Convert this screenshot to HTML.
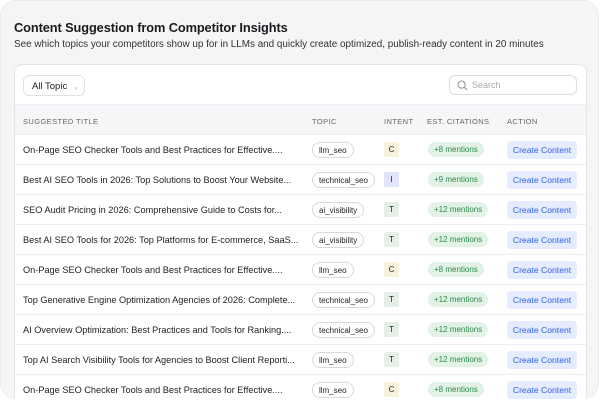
<!DOCTYPE html>
<html><head><style>
*{box-sizing:border-box;margin:0;padding:0}
body{width:600px;height:400px;background:#fff;font-family:"Liberation Sans",sans-serif;overflow:hidden;position:relative}
.panel{position:absolute;left:0;top:0;width:599px;height:399px;background:#f5f5f6;box-shadow:inset 0 0 0 1px #ececee;border-radius:16px;overflow:hidden}
h1{position:absolute;left:14px;top:20px;font-size:12.8px;font-weight:bold;color:#1b1b1f;letter-spacing:-0.1px}
.sub{position:absolute;left:14px;top:39px;font-size:9.9px;color:#333;white-space:nowrap}
.card{position:absolute;left:14px;top:64px;width:573px;height:345px;background:#fff;border:1px solid #e3e4e8;border-radius:8px;overflow:hidden}
.btn{position:absolute;left:8px;top:10px;width:62px;height:21px;border:1px solid #e0e1e5;border-radius:6px;font-size:9.5px;color:#222;padding:5px 0 0 8px}
.btn span{color:#aaa;font-size:7px;margin-left:3px}
.search{position:absolute;left:434px;top:10px;width:128px;height:20px;border:1px solid #dcdde2;border-radius:6px;font-size:9px;color:#aaa;padding:4px 0 0 22px}
.search svg{position:absolute;left:7px;top:4px}
.head{position:absolute;left:0;top:39px;width:100%;height:31px;background:#f5f6f8;border-top:1px solid #eceef1;border-bottom:1px solid #eceef1;font-size:7.5px;color:#666;letter-spacing:0.4px}
.head div,.row div{position:absolute}
.head div{top:12px}
.row{position:absolute;left:0;width:100%;height:30px;border-bottom:1px solid #eceef1;font-size:9.2px;color:#222}
.t{left:8px;top:10px;white-space:nowrap}
.tp{left:297px;top:7px;height:16px;border:1px solid #d8d9dd;border-radius:9px;padding:3px 6px 0;font-size:8px}
.in{left:369px;top:7px;width:15px;height:15px;border-radius:2px;font-size:8px;text-align:center;padding-top:3px}
.C{background:#f8f2dd}.I{background:#e1e4fb}.T{background:#e4efe7}
.m{left:413px;top:7px;height:15px;border-radius:8px;background:#e2f2e6;color:#2f8a4c;font-size:8px;padding:3px 6px 0}
.a{left:492px;top:6px;width:70px;height:18px;border-radius:4px;background:#e4ecfd;color:#2f62e8;font-size:8.6px;text-align:center;padding-top:4px}
</style></head><body>
<div class="panel">
<h1>Content Suggestion from Competitor Insights</h1>
<div class="sub">See which topics your competitors show up for in LLMs and quickly create optimized, publish-ready content in 20 minutes</div>
<div class="card">
<div class="btn">All Topic <span>&#8964;</span></div>
<div class="search"><svg width="11" height="11" viewBox="0 0 11 11"><circle cx="4.6" cy="4.6" r="3.6" fill="none" stroke="#999" stroke-width="1.1"/><path d="M7.3 7.3L10 10" stroke="#999" stroke-width="1.1"/></svg>Search</div>
<div class="head"><div style="left:8px">SUGGESTED TITLE</div><div style="left:297px">TOPIC</div><div style="left:369px">INTENT</div><div style="left:412px">EST. CITATIONS</div><div style="left:492px">ACTION</div></div>
<div class="row" style="top:70px"><div class="t">On-Page SEO Checker Tools and Best Practices for Effective....</div><div class="tp">llm_seo</div><div class="in C">C</div><div class="m">+8 mentions</div><div class="a">Create Content</div></div>
<div class="row" style="top:100px"><div class="t">Best AI SEO Tools in 2026: Top Solutions to Boost Your Website...</div><div class="tp">technical_seo</div><div class="in I">I</div><div class="m">+9 mentions</div><div class="a">Create Content</div></div>
<div class="row" style="top:130px"><div class="t">SEO Audit Pricing in 2026: Comprehensive Guide to Costs for...</div><div class="tp">ai_visibility</div><div class="in T">T</div><div class="m">+12 mentions</div><div class="a">Create Content</div></div>
<div class="row" style="top:160px"><div class="t">Best AI SEO Tools for 2026: Top Platforms for E-commerce, SaaS...</div><div class="tp">ai_visibility</div><div class="in T">T</div><div class="m">+12 mentions</div><div class="a">Create Content</div></div>
<div class="row" style="top:190px"><div class="t">On-Page SEO Checker Tools and Best Practices for Effective....</div><div class="tp">llm_seo</div><div class="in C">C</div><div class="m">+8 mentions</div><div class="a">Create Content</div></div>
<div class="row" style="top:220px"><div class="t">Top Generative Engine Optimization Agencies of 2026: Complete...</div><div class="tp">technical_seo</div><div class="in T">T</div><div class="m">+12 mentions</div><div class="a">Create Content</div></div>
<div class="row" style="top:250px"><div class="t">AI Overview Optimization: Best Practices and Tools for Ranking....</div><div class="tp">technical_seo</div><div class="in T">T</div><div class="m">+12 mentions</div><div class="a">Create Content</div></div>
<div class="row" style="top:280px"><div class="t">Top AI Search Visibility Tools for Agencies to Boost Client Reporti...</div><div class="tp">llm_seo</div><div class="in T">T</div><div class="m">+12 mentions</div><div class="a">Create Content</div></div>
<div class="row" style="top:310px"><div class="t">On-Page SEO Checker Tools and Best Practices for Effective....</div><div class="tp">llm_seo</div><div class="in C">C</div><div class="m">+8 mentions</div><div class="a">Create Content</div></div>
</div>
</div>
</body></html>
